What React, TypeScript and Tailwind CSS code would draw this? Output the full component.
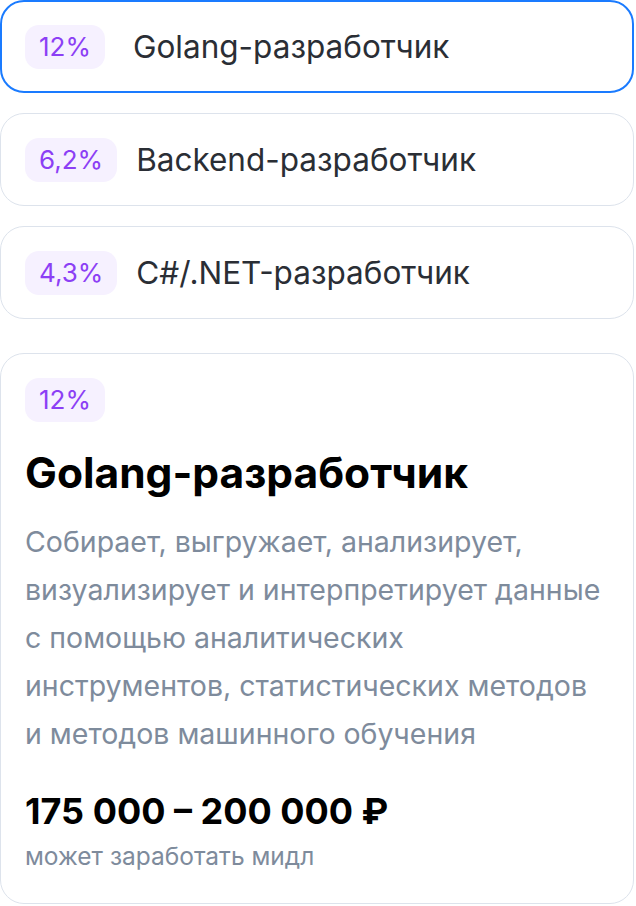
const roles = [
  { pct: '12%', title: 'Golang-разработчик', active: true },
  { pct: '6,2%', title: 'Backend-разработчик', active: false },
  { pct: '4,3%', title: 'C#/.NET-разработчик', active: false },
]

function Badge({ children }: { children: string }) {
  return (
    <span className="inline-flex h-11 items-center rounded-[14px] bg-[#f6f1ff] px-[14px] text-[26px] leading-none text-[#8c3ff5]">
      {children}
    </span>
  )
}

export default function App() {
  return (
    <div className="flex w-[634px] flex-col bg-white font-['Inter',sans-serif]">
      <div className="flex flex-col gap-5">
        {roles.map((r) => (
          <div
            key={r.pct}
            className={
              r.active
                ? 'flex h-[93px] items-center gap-[28px] rounded-3xl border-2 border-[#1a7bff] px-[23px]'
                : 'flex h-[93px] items-center gap-[19px] rounded-3xl border border-[#dde3ec] px-6'
            }
          >
            <Badge>{r.pct}</Badge>
            <span className="text-[31.5px] leading-none text-[#2a2e35]">{r.title}</span>
          </div>
        ))}
      </div>

      <div className="mt-[34px] flex flex-col items-start rounded-3xl border border-[#dde3ec] px-6 pt-6 pb-[35px]">
        <Badge>12%</Badge>
        <h2 className="mt-[30px] text-[42.5px] font-bold leading-none text-black">Golang-разработчик</h2>
        <p className="mt-[23px] text-[28.5px] leading-[48px] text-[#7e8b9c]">
          Собирает, выгружает, анализирует,
          <br />
          визуализирует и интерпретирует данные
          <br />
          с помощью аналитических
          <br />
          инструментов, статистических методов
          <br />
          и методов машинного обучения
        </p>
        <div className="mt-[35px] text-[36px] font-bold leading-none text-black">175 000 – 200 000 ₽</div>
        <div className="mt-[15px] text-[24.5px] leading-none text-[#7e8b9c]">может заработать мидл</div>
      </div>
    </div>
  )
}
